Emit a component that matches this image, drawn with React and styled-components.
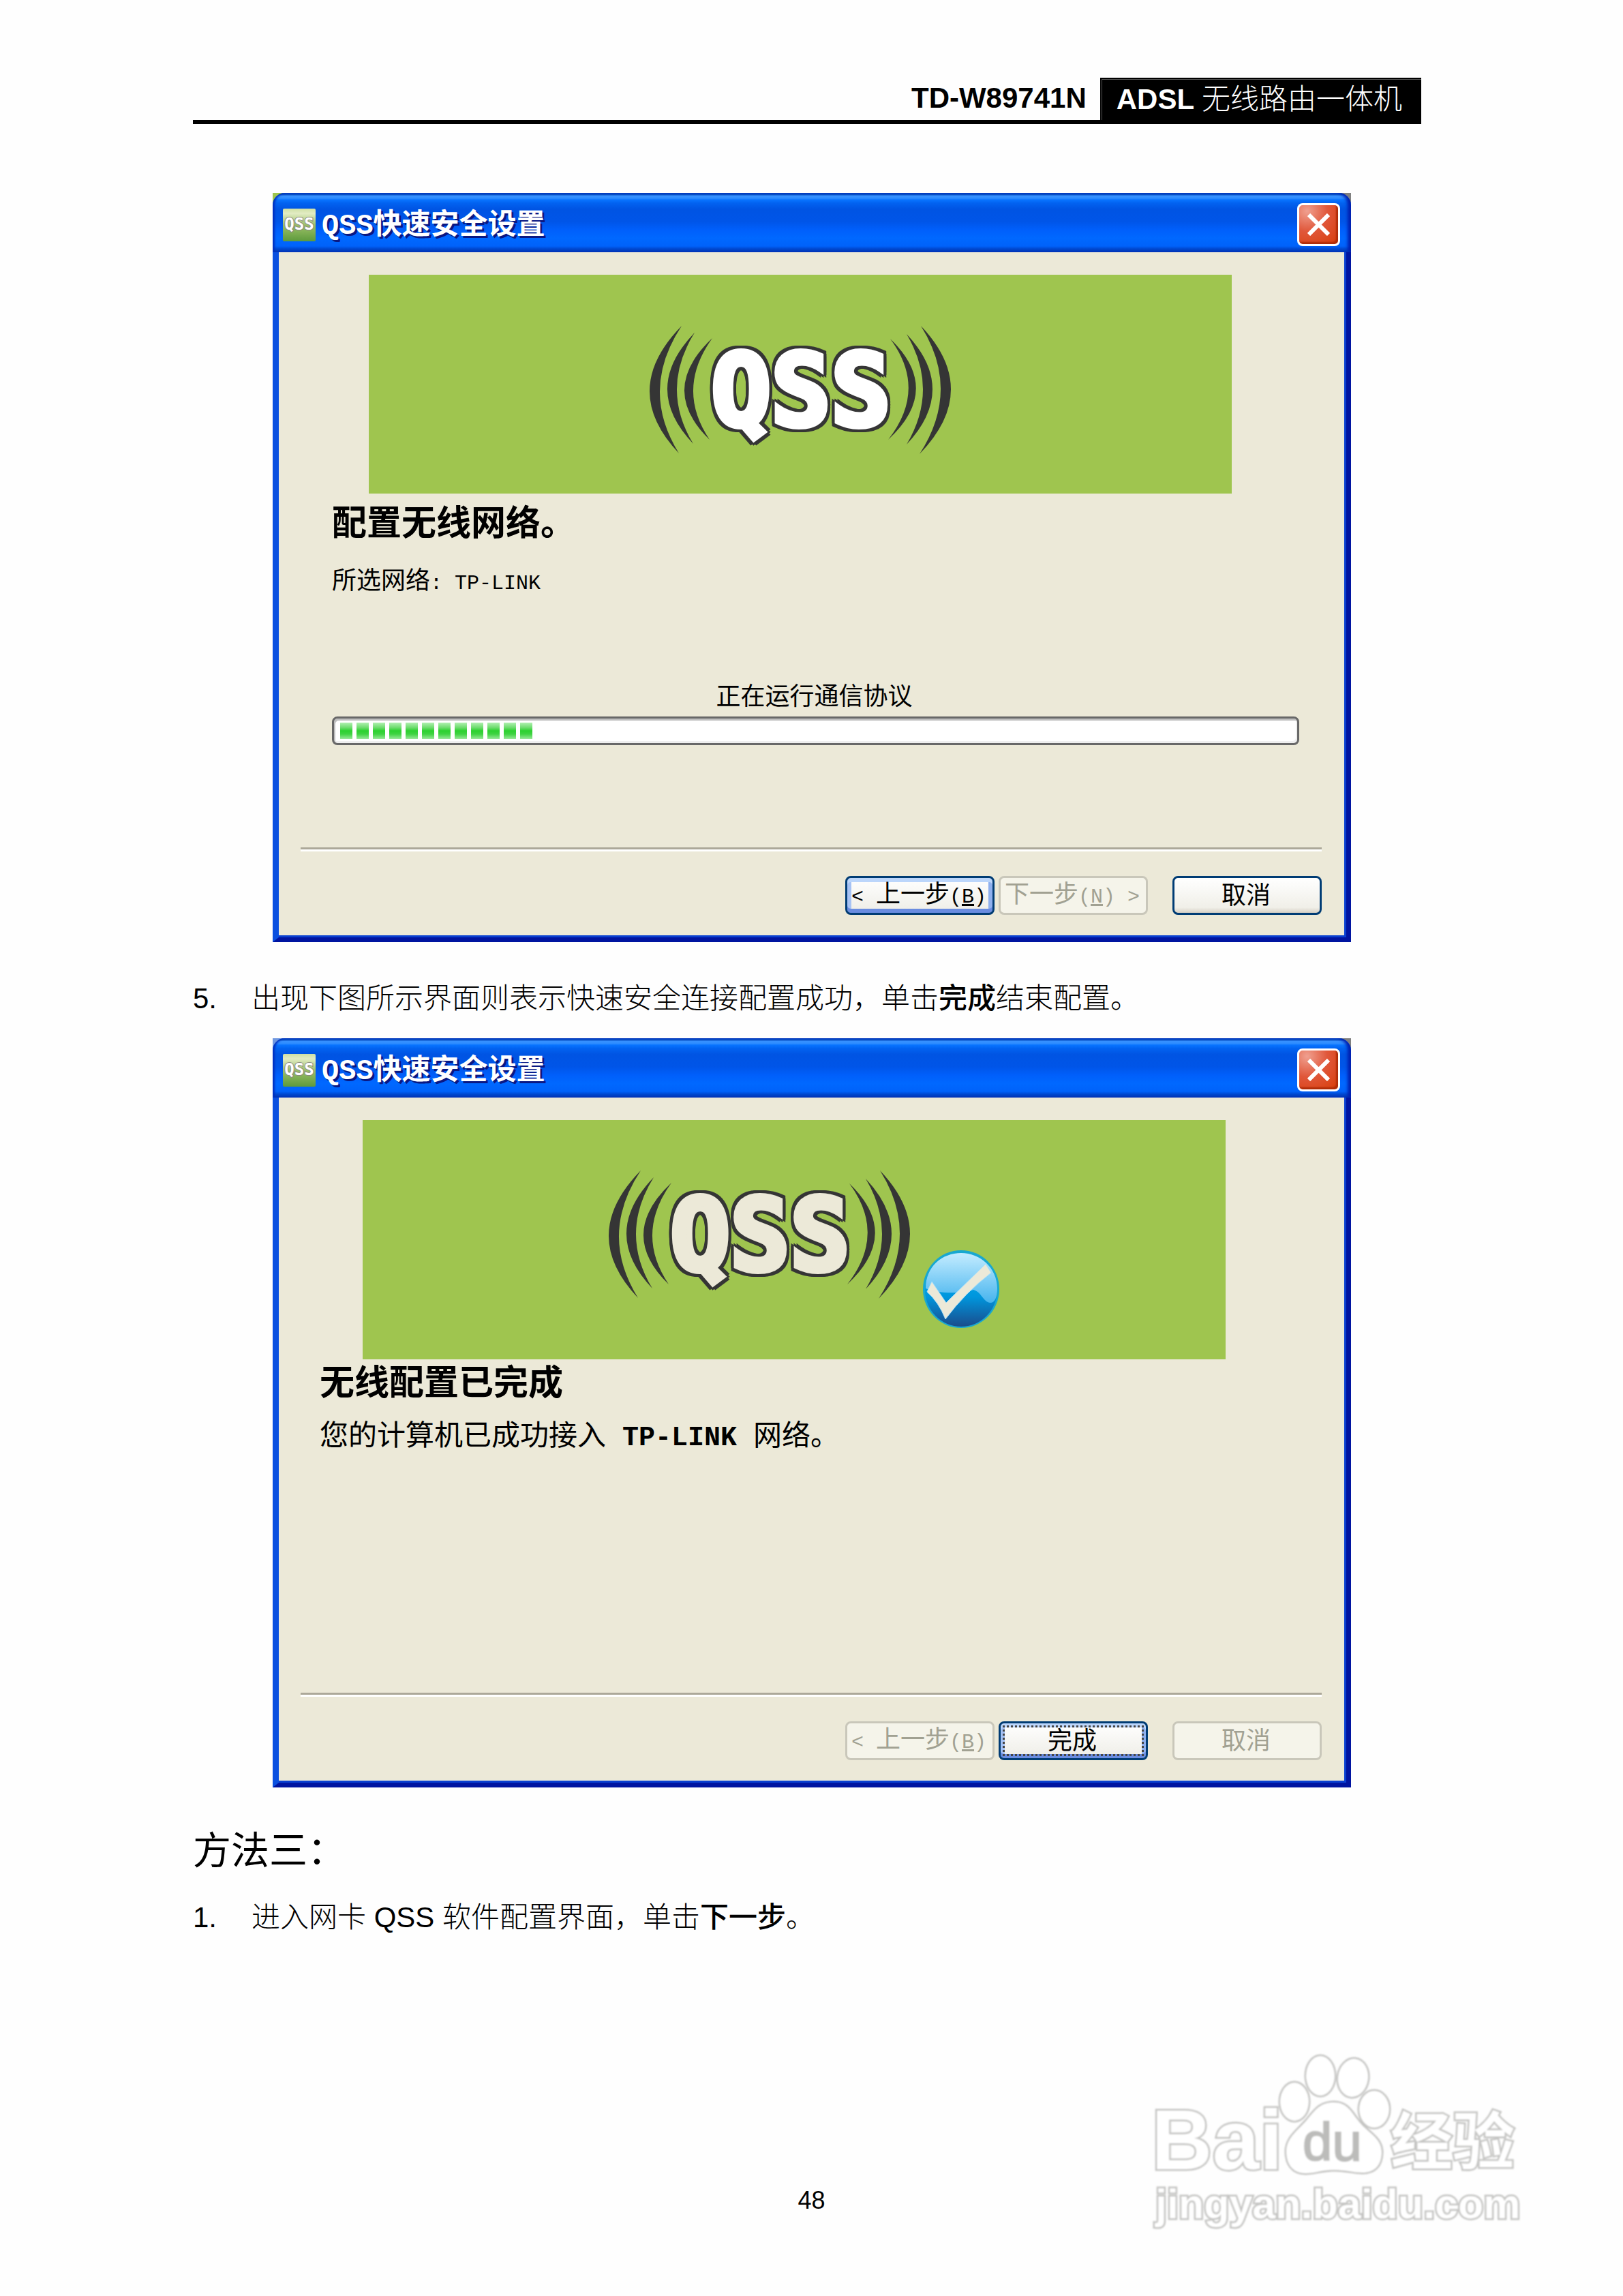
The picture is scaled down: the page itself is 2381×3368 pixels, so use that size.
import styled, { createGlobalStyle, css } from 'styled-components';

const arcs = [
  'M55 8Q-37 102 51 195Q-7 102 55 8Z',
  'M74 18Q-5 100 72 181Q23 100 74 18Z',
  'M100 26Q20 101 96 175Q46 101 100 26Z',
  'M361 27Q438 101 358 175Q416 101 361 27Z',
  'M385 20Q461 101 385 182Q433 101 385 20Z',
  'M406 8Q495 102 404 196Q465 102 406 8Z',
];

const QssLogo = ({ fill }) => (
  <LogoSvg viewBox="0 0 458 204" role="img" aria-label="QSS">
    {arcs.map((d) => (
      <path key={d} d={d} fill="#353535" />
    ))}
    <LogoText x="230" y="154" $fill={fill}>
      QSS
    </LogoText>
  </LogoSvg>
);

const CheckBadge = () => (
  <BadgeSvg viewBox="0 0 113 115" aria-hidden="true">
    <defs>
      <linearGradient id="ball" x1="0" y1="0" x2="0" y2="1">
        <stop offset="0.45" stopColor="#00a0e4" />
        <stop offset="0.6" stopColor="#0095dc" />
        <stop offset="1" stopColor="#1a4c8c" />
      </linearGradient>
      <linearGradient id="gloss" x1="0" y1="0" x2="0" y2="1">
        <stop offset="0" stopColor="#c4ecff" />
        <stop offset="1" stopColor="#46b4ee" />
      </linearGradient>
    </defs>
    <ellipse cx="56" cy="57" rx="56" ry="57" fill="#18a8d0" />
    <ellipse cx="56" cy="58" rx="53" ry="54" fill="url(#ball)" />
    <path
      d="M4 56C4 24 28 4 56 4S109 26 109 56C109 70 105 77 99 77C88 76 86 61 74 58C60 63 25 65 4 56Z"
      fill="url(#gloss)"
    />
    <path
      d="M13 46L34 77L92 20L100 33Q62 62 33 101Q23 76 6 61Z"
      fill="#ece9d8"
      stroke="#a9e0fa"
      strokeWidth="1"
    />
  </BadgeSvg>
);

const Watermark = () => (
  <WatermarkSvg viewBox="0 0 545 258" role="img" aria-label="Baidu">
    <g fill="#fff" stroke="#c4c4c2" strokeWidth="5">
      <text x="-1" y="169" fontSize="124" fontWeight="700">
        Bai
      </text>
      <ellipse cx="209" cy="70" rx="21" ry="28" />
      <ellipse cx="247" cy="32" rx="21" ry="29" />
      <ellipse cx="295" cy="35" rx="22" ry="28" transform="rotate(8 295 35)" />
      <ellipse cx="326" cy="81" rx="22" ry="27" />
      <path d="M267 71C286 71 292 84 302 97C315 115 337 122 337 144C337 164 326 174 309 174C294 174 285 170 267 170C249 170 240 175 225 175C206 175 197 161 197 143C197 123 213 113 227 97C240 81 247 71 267 71Z" />
      <text x="350" y="161" fontSize="91" fontWeight="700">
        经验
      </text>
      <text x="5" y="241" fontSize="61" fontWeight="700">
        jingyan.baidu.com
      </text>
    </g>
    <text
      x="221"
      y="156"
      fontSize="78"
      fill="#bcbcba"
      stroke="#bcbcba"
      strokeWidth="2"
    >
      du
    </text>
  </WatermarkSvg>
);

const Dialog = ({ title, corner, children, footer }) => (
  <Window $corner={corner}>
    <TitleBar>
      <AppIcon viewBox="0 0 48 48" aria-hidden="true">
        <defs>
          <linearGradient id="appIcon" x1="0" y1="0" x2="0" y2="1">
            <stop offset="0" stopColor="#cfe0a4" />
            <stop offset="0.15" stopColor="#e2ecc4" />
            <stop offset="0.5" stopColor="#9cc067" />
            <stop offset="1" stopColor="#5d9a3c" />
          </linearGradient>
        </defs>
        <rect width="48" height="48" rx="2" fill="url(#appIcon)" />
        <text x="24" y="31">
          QSS
        </text>
      </AppIcon>
      <WindowTitle>{title}</WindowTitle>
      <CloseButton aria-label="关闭">
        <svg viewBox="0 0 33 33" aria-hidden="true">
          <path d="M2 2L31 31M31 2L2 31" stroke="#fff" strokeWidth="6" />
        </svg>
      </CloseButton>
    </TitleBar>
    <WindowBody>
      {children}
      <ButtonBar>{footer}</ButtonBar>
    </WindowBody>
  </Window>
);

const App = () => {
  return (
    <Page>
      <GlobalStyle />
      <Header>
        <Model>TD-W89741N</Model>
        <Product>
          ADSL <span>无线路由一体机</span>
        </Product>
      </Header>

      <Dialog
        title="QSS快速安全设置"
        corner="#9ec54e"
        footer={
          <>
            <Button $active>
              <Latin>&lt; </Latin>上一步
              <Latin>
                (<u>B</u>)
              </Latin>
            </Button>
            <Button disabled>
              下一步
              <Latin>
                (<u>N</u>) &gt;
              </Latin>
            </Button>
            <Button $apart>取消</Button>
          </>
        }
      >
        <ConfigBanner>
          <QssLogo fill="#ffffff" />
        </ConfigBanner>
        <ConfigContent>
          <DialogHeading>配置无线网络。</DialogHeading>
          <NetworkLine>
            所选网络<Latin>: TP-LINK</Latin>
          </NetworkLine>
          <Status htmlFor="protocol">正在运行通信协议</Status>
          <Progress id="protocol" max="1000" value="205" />
        </ConfigContent>
      </Dialog>

      <Step>
        <StepNumber>5.</StepNumber>
        <p>
          出现下图所示界面则表示快速安全连接配置成功，单击<b>完成</b>
          结束配置。
        </p>
      </Step>

      <Dialog
        title="QSS快速安全设置"
        corner="#7098e0"
        footer={
          <>
            <Button disabled>
              <Latin>&lt; </Latin>上一步
              <Latin>
                (<u>B</u>)
              </Latin>
            </Button>
            <Button $active $focused>
              完成
            </Button>
            <Button $apart disabled>
              取消
            </Button>
          </>
        }
      >
        <DoneBanner>
          <QssLogo fill="#ece9d8" />
          <CheckBadge />
        </DoneBanner>
        <DoneContent>
          <DialogHeading>无线配置已完成</DialogHeading>
          <DoneLine>
            您的计算机已成功接入<b> TP-LINK </b>网络。
          </DoneLine>
        </DoneContent>
      </Dialog>

      <MethodHeading>方法三：</MethodHeading>
      <Step>
        <StepNumber>1.</StepNumber>
        <p>
          进入网卡 <span>QSS</span> 软件配置界面，单击<b>下一步</b>。
        </p>
      </Step>

      <PageNumber>48</PageNumber>
      <Watermark />
    </Page>
  );
};

const GlobalStyle = createGlobalStyle`
  * {
    box-sizing: border-box;
  }

  body {
    margin: 0;
    background: #fefefe;
    color: #000;
    font-family: 'Liberation Sans', 'Noto Sans CJK SC', sans-serif;
  }

  h1, h2, p {
    margin: 0;
  }
`;

const Page = styled.main`
  position: relative;
  display: flex;
  flex-direction: column;
  padding: 114px 296px 116px 283px;
`;

const Header = styled.header`
  display: flex;
  justify-content: flex-end;
  height: 68px;
  border-bottom: 6px solid #000;
  margin-bottom: 101px;
  font-size: 42px;
  font-weight: 700;
  line-height: 60px;
`;

const Model = styled.span`
  padding-right: 20px;
`;

const Product = styled.span`
  padding: 2px 28px 0 24px;
  background: #000;
  color: #fff;
  box-shadow: inset 2px 2px 0 #000, inset 3px 3px 0 #555;

  span {
    font-weight: 300;
  }
`;

const Window = styled.section`
  margin: 0 103px 0 117px;
  background: linear-gradient(to right, ${(p) => p.$corner} 50%, #808080 50%);
`;

const TitleBar = styled.div`
  display: flex;
  align-items: center;
  height: 87px;
  padding: 6px 16px 0 15px;
  border-radius: 18px 18px 0 0;
  background: linear-gradient(
    #0a58c9 0,
    #0a58c9 3px,
    #3a93ff 4px,
    #2c8bff 8px,
    #0874ff 10px,
    #0262f0 15px,
    #0054e3 24px,
    #0055e8 42px,
    #005ffb 54px,
    #0068ff 66px,
    #0062fa 78px,
    #0048d0 82px,
    #0040b8 87px
  );
  box-shadow: inset 3px 0 3px #0030c0, inset -5px 0 4px #0020b0;
`;

const AppIcon = styled.svg`
  width: 48px;
  height: 48px;

  text {
    fill: #fff;
    stroke: #8a8a80;
    stroke-width: 2px;
    paint-order: stroke;
    text-anchor: middle;
    font: 700 24px 'DejaVu Sans Mono', monospace;
  }
`;

const WindowTitle = styled.h1`
  flex: 1;
  padding: 4px 0 0 9px;
  color: #fff;
  font: 700 42px / 60px 'Liberation Mono', 'Noto Sans CJK SC', monospace;
  text-shadow: 3px 3px 0 #0a1883;
`;

const CloseButton = styled.button`
  display: grid;
  place-items: center;
  width: 63px;
  height: 63px;
  padding: 0;
  border: 3px solid #fff;
  border-radius: 8px;
  background: radial-gradient(circle at 20% 15%, #f0a090, #e0573a 45%, #d83c08);
  box-shadow: inset -3px -3px 2px #b02c08;

  svg {
    width: 33px;
    height: 33px;
  }
`;

const WindowBody = styled.div`
  display: flex;
  flex-direction: column;
  min-height: 1012px;
  padding: 33px 3px 3px 0;
  border-style: solid;
  border-width: 0 7px 7px 9px;
  border-color: #0014a0 #0014a0 #0014a0 #0a50e0;
  background: #ece9d8;
  box-shadow: inset -3px -3px 0 #0a40d0;
`;

const Banner = styled.div`
  display: flex;
  justify-content: center;
  align-items: flex-start;
  background: #9fc54f;
`;

const ConfigBanner = styled(Banner)`
  height: 321px;
  margin: 0 165px 0 132px;
  padding-top: 67px;
`;

const DoneBanner = styled(Banner)`
  height: 351px;
  gap: 11px;
  margin: 0 174px 0 123px;
  padding: 66px 0 0 22px;
`;

const LogoSvg = styled.svg`
  width: 458px;
  height: 204px;
`;

const LogoText = styled.text`
  fill: ${(p) => p.$fill};
  stroke: ${(p) => p.$fill};
  stroke-width: 8px;
  text-anchor: middle;
  font: 700 146px 'DejaVu Sans Mono', monospace;
  filter: drop-shadow(4px 0 0 #353535) drop-shadow(-4px 0 0 #353535)
    drop-shadow(0 4px 0 #353535) drop-shadow(0 -4px 0 #353535);
`;

const BadgeSvg = styled.svg`
  width: 113px;
  height: 115px;
  margin-top: 125px;
`;

const ConfigContent = styled.div`
  display: flex;
  flex-direction: column;
  margin: 14px 66px 0 78px;
`;

const DoneContent = styled.div`
  margin: 5px 66px 0 60px;
`;

const DialogHeading = styled.h2`
  font-size: 51px;
  font-weight: 700;
  line-height: 60px;
`;

const NetworkLine = styled.p`
  margin-top: 30px;
  font-size: 36px;
  line-height: 48px;
`;

const DoneLine = styled.p`
  margin-top: 23px;
  font-size: 42px;
  line-height: 48px;

  b {
    font: 700 40px / 48px 'Liberation Mono', monospace;
    white-space: pre;
  }
`;

const Latin = styled.span`
  font-family: 'Liberation Mono', monospace;
  font-size: 30px;
  white-space: pre;
`;

const Status = styled.label`
  margin-top: 118px;
  padding-right: 4px;
  font-size: 36px;
  line-height: 48px;
  text-align: center;
`;

const Progress = styled.progress`
  appearance: none;
  width: 100%;
  height: 42px;
  margin-top: 5px;
  padding: 6px 9px;
  border: 3px solid #686868;
  border-radius: 8px;
  background: #fff;
  box-shadow: inset 2px 3px 0 #bebebe, inset -2px -3px 0 #efefef;

  &::-webkit-progress-bar {
    background: transparent;
  }

  &::-webkit-progress-value {
    background: repeating-linear-gradient(
        to right,
        transparent 0 18px,
        #fff 18px 24px
      ),
      linear-gradient(#b0f0b0, #6fdc70 30%, #2cd12f 50%, #3fd342 70%, #98e898);
  }
`;

const ButtonBar = styled.div`
  display: flex;
  justify-content: flex-end;
  gap: 6px;
  margin: auto 33px 0 32px;
  padding: 36px 0 30px;
  border-top: 3px solid #aca899;
  box-shadow: inset 0 3px 0 #fff;
`;

const activeButton = css`
  background: linear-gradient(#fff, #eeede6) padding-box;
  box-shadow: inset 0 6px 0 #bcd6fb, inset 0 -6px 0 #6a8ce0,
    inset 6px 0 0 #a6c2f4, inset -6px 0 0 #8fb0ee;
`;

const Button = styled.button`
  position: relative;
  width: 219px;
  height: 57px;
  margin-top: 3px;
  margin-left: ${(p) => (p.$apart ? '30px' : '0')};
  padding: 0 3px 0 0;
  border: 3px solid #003c74;
  border-radius: 8px;
  background: linear-gradient(#fff, #f0efe8 85%, #d6d0c5);
  color: #000;
  font-family: 'Liberation Sans', 'Noto Sans CJK SC', sans-serif;
  font-size: 36px;
  line-height: 48px;
  white-space: nowrap;

  ${(p) => p.$active && activeButton}

  ${(p) =>
    p.$focused &&
    css`
      &::after {
        content: '';
        position: absolute;
        inset: 3px;
        border: 3px dotted #444;
      }
    `}

  &:disabled {
    border-color: #c9c7ba;
    background: #f5f4ea;
    color: #a1a192;
  }
`;

const Step = styled.div`
  display: flex;
  margin-top: 53px;
  margin-bottom: 28px;
  font-size: 42px;
  font-weight: 300;
  line-height: 60px;

  b {
    font-weight: 500;
  }

  span {
    font-weight: 400;
  }

  h2 + & {
    margin: 32px 0 0;
  }
`;

const StepNumber = styled.div`
  width: 86px;
  font-weight: 400;
`;

const MethodHeading = styled.h2`
  margin-top: 57px;
  font-size: 56px;
  font-weight: 400;
  line-height: 72px;
`;

const PageNumber = styled.footer`
  margin-top: 361px;
  padding-left: 13px;
  font-size: 36px;
  line-height: 48px;
  text-align: center;
`;

const WatermarkSvg = styled.svg`
  position: absolute;
  right: 146px;
  bottom: 97px;
  width: 545px;
  height: 258px;
  font-family: 'Liberation Sans', 'Noto Sans CJK SC', sans-serif;
  paint-order: stroke;
  filter: blur(1px);
`;

export default App;
